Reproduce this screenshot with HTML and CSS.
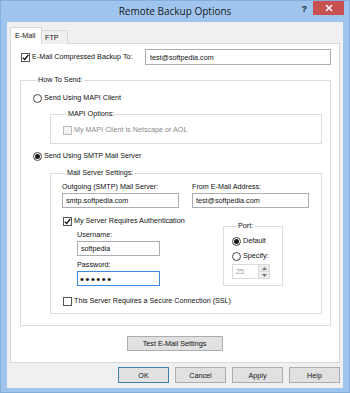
FILE: index.html
```html
<!DOCTYPE html>
<html lang="en">
  <head>
    <meta charset="UTF-8" />
    <title>Remote Backup Options</title>
    <link rel="stylesheet" href="styles.css">
  </head>
  <body>
    <div id="window">
      <!-- caption -->
      <div id="titlebar">
        <span></span>
        <span id="title">Remote Backup Options</span>
        <div id="caption-buttons">
          <span class="help-btn">?</span>
          <span class="close-btn">
            <svg width="8" height="8" viewBox="0 0 8 8"><path d="M1 1 L7 7 M7 1 L1 7" stroke="#fff" stroke-width="1.5" /></svg>
          </span>
        </div>
      </div>

      <div id="client">
        <div class="tabs">
          <div class="tab active">E-Mail</div>
          <div class="tab">FTP</div>
        </div>

        <div class="panel">
          <div class="to-row">
            <label class="opt">
              <span class="check"><svg width="7" height="7" viewBox="0 0 7 7"><path d="M0.8 3.6 L2.7 5.6 L6.3 0.8" fill="none" stroke="#000" stroke-width="1.3" /></svg></span>
              E-Mail Compressed Backup To:
            </label>
            <input class="edit to-edit" type="text" value="test@softpedia.com" />
          </div>

          <fieldset class="group how">
            <legend>How To Send:</legend>
            <label class="opt first"><span class="radio"></span>Send Using MAPI Client</label>

            <fieldset class="group mapi">
              <legend>MAPI Options:</legend>
              <label class="opt disabled"><span class="check"></span>My MAPI Client is Netscape or AOL</label>
            </fieldset>

            <label class="opt smtp-opt"><span class="radio on"></span>Send Using SMTP Mail Server</label>

            <fieldset class="group server">
              <legend>Mail Server Settings:</legend>
              <div class="server-row">
                <div class="field">
                  <span>Outgoing (SMTP) Mail Server:</span>
                  <input class="edit" type="text" value="smtp.softpedia.com" />
                </div>
                <div class="field">
                  <span>From E-Mail Address:</span>
                  <input class="edit" type="text" value="test@softpedia.com" />
                </div>
              </div>

              <div class="auth-row">
                <div class="auth">
                  <label class="opt">
                    <span class="check"><svg width="7" height="7" viewBox="0 0 7 7"><path d="M0.8 3.6 L2.7 5.6 L6.3 0.8" fill="none" stroke="#000" stroke-width="1.3" /></svg></span>
                    My Server Requires Authentication
                  </label>
                  <div class="creds">
                    <span class="cred-label">Username:</span>
                    <input class="edit" type="text" value="softpedia" />
                    <span class="cred-label">Password:</span>
                    <input class="edit focused pass" type="password" value="secret" />
                  </div>
                </div>

                <fieldset class="group port">
                  <legend>Port:</legend>
                  <label class="opt first"><span class="radio on"></span>Default</label>
                  <label class="opt"><span class="radio"></span>Specify:</label>
                  <div class="spin">
                    <span class="spin-value">25</span>
                    <span class="spin-btns">
                      <span class="spin-btn"><svg width="5" height="3" viewBox="0 0 5 3"><path d="M0 3 L2.5 0 L5 3 Z" fill="#777" /></svg></span>
                      <span class="spin-btn"><svg width="5" height="3" viewBox="0 0 5 3"><path d="M0 0 L2.5 3 L5 0 Z" fill="#777" /></svg></span>
                    </span>
                  </div>
                </fieldset>
              </div>

              <label class="opt ssl-opt"><span class="check"></span>This Server Requires a Secure Connection (SSL)</label>
            </fieldset>
          </fieldset>

          <div class="test-row">
            <button class="btn test-btn">Test E-Mail Settings</button>
          </div>
        </div>

        <div class="buttons">
          <button class="btn default">OK</button>
          <button class="btn">Cancel</button>
          <button class="btn">Apply</button>
          <button class="btn">Help</button>
        </div>
      </div>
    </div>
  </body>
</html>
```

FILE: styles.css
```css
* {
  box-sizing: border-box;
}
html,
body {
  margin: 0;
}
body {
  width: 350px;
  height: 393px;
  overflow: hidden;
  font-family: "Liberation Sans", Arial, sans-serif;
  font-size: 7.2px;
  color: #111;
}
#window {
  height: 393px;
  background-color: #9fc5ef; /* win8 frame */
  border: 1px solid #86aedd;
  display: flex;
  flex-direction: column;
}
#titlebar {
  height: 21px;
  display: grid;
  grid-template-columns: 1fr auto 1fr;
  align-items: start;
}
#title {
  font-family: "Open Sans", "Noto Sans", sans-serif;
  font-size: 10px;
  line-height: 21px;
  color: #1a1a1a;
}
#caption-buttons {
  justify-self: end;
  display: flex;
  align-items: flex-start;
  margin-right: 5px;
}
.help-btn {
  font-family: "Liberation Sans", Arial, sans-serif;
  font-weight: bold;
  font-size: 9px;
  line-height: 16px;
  color: #222;
  margin-right: 6px;
}
.close-btn {
  width: 31px;
  height: 14px;
  background-color: #c75050;
  display: flex;
  align-items: center;
  justify-content: center;
}
.close-btn svg {
  display: block;
}
#client {
  flex: 1;
  margin: 0 6px 4px 6px;
  background-color: #f0f0f0;
  padding: 5px 3px 5px 3px;
  display: flex;
  flex-direction: column;
}

/* tabs */
.tabs {
  display: flex;
  align-items: flex-end;
  height: 17px;
  position: relative;
  z-index: 1;
}
.tab {
  border: 1px solid #d9d9d9;
  border-bottom: none;
  height: 14px;
  width: 27px;
  padding-left: 3px;
  line-height: 13px;
  background-color: #f0f0f0;
  margin-left: -1px;
}
.tab.active {
  height: 17px;
  width: 32px;
  padding-left: 4px;
  line-height: 16px;
  background-color: #fff;
  margin-left: 0;
  position: relative;
  z-index: 1;
}
.panel {
  flex: 1;
  margin-top: -1px;
  background-color: #fff;
  border: 1px solid #d9d9d9;
  padding: 5px 8px 0 9px;
}

/* option rows (checkbox / radio) */
.opt {
  display: flex;
  align-items: center;
  height: 10px;
  line-height: 10px;
  white-space: nowrap;
}
.check,
.radio {
  width: 9px;
  height: 9px;
  border: 1px solid #555;
  background-color: #fff;
  margin-right: 2px;
  flex: none;
  display: flex;
  align-items: center;
  justify-content: center;
}
.check svg {
  display: block;
}
.radio {
  border-radius: 50%;
  border-color: #444;
}
.radio.on::after {
  content: "";
  width: 5px;
  height: 5px;
  border-radius: 50%;
  background-color: #1a1a1a;
}
.opt.disabled {
  color: #8a8a8a;
}
.opt.disabled .check {
  border-color: #bcbcbc;
  background-color: #f4f4f4;
}

/* edit boxes */
.edit {
  font: inherit;
  color: #111;
  height: 15px;
  border: 1px solid #abadb3;
  background-color: #fff;
  padding: 0 3px;
  margin: 0;
  outline: none;
}
.edit.focused {
  border-color: #3c8ae0;
}
.edit.pass {
  font-size: 11px;
  letter-spacing: 1.6px;
  padding-left: 2px;
}

.to-row {
  display: flex;
  align-items: center;
  height: 16px;
}
.to-row .opt {
  margin-left: 1px;
}
.to-edit {
  margin-left: auto;
  width: 186px;
  height: 16px;
  padding-left: 4px;
}

/* group boxes */
.group {
  border: 1px solid #dcdcdc;
  margin: 0;
  padding: 0;
  min-width: 0;
}
.group legend {
  padding: 0 1px;
  margin-left: 4px;
  line-height: 10px;
}
.how {
  margin-top: 10px;
  padding: 0 8px 11px 12px;
}
.how > .opt.first {
  margin-top: 8px;
}
.mapi {
  margin: 6px 0 0 17px;
  padding: 0 0 8px 12px;
}
.mapi .opt {
  margin-top: 6px;
}
.smtp-opt {
  margin-top: 7px;
}
.server {
  margin: 7px 0 0 17px;
  padding: 0 0 7px 11px;
}
.server-row {
  margin-top: 4px;
  display: flex;
  gap: 13px;
}
.field {
  display: flex;
  flex-direction: column;
  line-height: 10px;
}
.field .edit {
  margin-top: 1px;
  width: 117px;
}
.auth-row {
  margin-top: 8px;
  display: flex;
  align-items: flex-start;
}
.auth {
  width: 161px;
  flex: none;
}
.auth > .opt {
  margin-left: 1px;
}
.creds {
  padding-left: 15px;
  display: flex;
  flex-direction: column;
  align-items: flex-start;
}
.cred-label {
  margin-top: 4px;
  line-height: 10px;
}
.creds .edit {
  margin-top: 1px;
  width: 83px;
}
.port {
  margin-top: 5px;
  width: 60px;
  padding: 0 0 6px 8px;
}
.port legend {
  margin-left: 5px;
}
.port .opt {
  margin-top: 5px;
}
.spin {
  margin-top: 3px;
  width: 38px;
  height: 15px;
  border: 1px solid #d9d9d9;
  display: flex;
  background-color: #fff;
}
.spin-value {
  flex: 1;
  color: #9a9a9a;
  line-height: 13px;
  padding-left: 3px;
}
.spin-btns {
  width: 11px;
  display: flex;
  flex-direction: column;
  border-left: 1px solid #d9d9d9;
}
.spin-btn {
  flex: 1;
  background-color: #ececec;
  display: flex;
  align-items: center;
  justify-content: center;
}
.spin-btn:first-child {
  border-bottom: 1px solid #d9d9d9;
}
.spin-btn svg {
  display: block;
}
.ssl-opt {
  margin-top: 10px;
  margin-left: 1px;
}

/* push buttons */
.btn {
  font: inherit;
  color: #111;
  height: 15px;
  padding: 0;
  background-color: #e1e1e1;
  border: 1px solid #adadad;
  border-radius: 0;
}
.btn.default {
  border-color: #3c7fb1;
}
.test-row {
  margin-top: 10px;
  display: flex;
  justify-content: center;
}
.test-btn {
  width: 96px;
  margin-right: 2px;
}
.buttons {
  margin-top: 4px;
  display: flex;
  justify-content: flex-end;
  gap: 6px;
}
.buttons .btn {
  width: 51px;
  height: 16px;
}
```
